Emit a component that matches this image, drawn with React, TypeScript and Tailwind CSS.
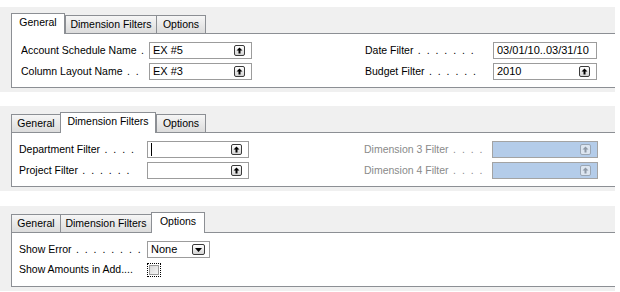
import React from 'react';

type TabName = 'General' | 'Dimension Filters' | 'Options';

const tabs: { name: TabName; w: string; wActive: string }[] = [
  { name: 'General', w: 'w-[50px]', wActive: 'w-[54px]' },
  { name: 'Dimension Filters', w: 'w-[92px]', wActive: 'w-[96px]' },
  { name: 'Options', w: 'w-[50px]', wActive: 'w-[54px]' },
];

const LookupBtn = ({ disabled }: { disabled?: boolean }) => (
  <span
    className={`ml-auto flex h-[11px] w-[11px] items-center justify-center rounded-[2px] border ${
      disabled ? 'border-[#9aa6b4] bg-[#dce5f0]' : 'border-[#3a3a3a] bg-gradient-to-b from-white to-[#d4d4d4]'
    }`}
  >
    <svg width="7" height="7" viewBox="0 0 7 7">
      <path d="M3.5 0.5 L6.5 3.5 H4.5 V6.5 H2.5 V3.5 H0.5 Z" fill={disabled ? '#8e99a6' : '#000'} />
    </svg>
  </span>
);

const Field = ({
  value,
  width,
  lookup = true,
  disabled,
  cursor,
}: {
  value?: string;
  width: string;
  lookup?: boolean;
  disabled?: boolean;
  cursor?: boolean;
}) => (
  <div
    className={`flex h-[17px] items-center border pl-[3px] pr-[6px] text-[11px] ${width} ${
      disabled ? 'border-[#a3a3a3] bg-[#b4cce9]' : 'border-[#9c9c9c] bg-white'
    }`}
  >
    {cursor && <span className="h-[13px] w-px bg-black" />}
    <span className="whitespace-nowrap leading-none">{value}</span>
    {lookup && <LookupBtn disabled={disabled} />}
  </div>
);

const Label = ({ text, dots, disabled }: { text: string; dots: string; disabled?: boolean }) => (
  <div className={`w-[128px] overflow-hidden whitespace-nowrap ${disabled ? 'text-[#8a8a8a]' : 'text-black'}`}>
    {text}
    <span className="tracking-[1.5px]">{dots}</span>
  </div>
);

const Panel = ({ active, children, className = '' }: { active: TabName; children: React.ReactNode; className?: string }) => (
  <div className={`h-[85px] w-[615px] bg-[#f0f0f0] ${className}`}>
    <div className="flex h-[26px] items-end pl-[11px]">
      {tabs.map((t) =>
        t.name === active ? (
          <div
            key={t.name}
            className={`relative z-10 -mb-px flex h-[21px] items-center justify-center border-x border-t border-[#8c8f94] bg-white pb-[2px] ${t.wActive}`}
          >
            {t.name}
          </div>
        ) : (
          <div
            key={t.name}
            className={`flex h-[18px] items-center justify-center border-l border-t border-r border-[#8c8f94] bg-gradient-to-b from-[#f6f6f6] to-[#dcdcdc] -mr-px ${t.w}`}
          >
            {t.name}
          </div>
        )
      )}
    </div>
    <div className="ml-[11px] h-[55px] border-y border-l border-[#8c8f94] bg-white">{children}</div>
  </div>
);

const App: React.FC = () => {
  return (
    <div className="h-[292px] w-[620px] overflow-hidden bg-white pt-[7px] font-['Liberation_Sans',Arial,sans-serif] text-[10.5px] text-black">
      <Panel active="General">
        <div className="flex pt-[8px] pl-[9px]">
          <div className="flex flex-col gap-[4px]">
            <div className="flex h-[17px] items-center">
              <Label text="Account Schedule Name" dots=" ." />
              <Field value="EX #5" width="w-[103px]" />
            </div>
            <div className="flex h-[17px] items-center">
              <Label text="Column Layout Name" dots=" . ." />
              <Field value="EX #3" width="w-[103px]" />
            </div>
          </div>
          <div className="ml-[113px] flex flex-col gap-[4px]">
            <div className="flex h-[17px] items-center">
              <Label text="Date Filter" dots=" . . . . . . ." />
              <Field value="03/01/10..03/31/10" width="w-[104px]" lookup={false} />
            </div>
            <div className="flex h-[17px] items-center">
              <Label text="Budget Filter" dots=" . . . . . ." />
              <Field value="2010" width="w-[104px]" />
            </div>
          </div>
        </div>
      </Panel>

      <Panel active="Dimension Filters" className="mt-[14px]">
        <div className="flex pt-[8px] pl-[7px]">
          <div className="flex flex-col gap-[4px]">
            <div className="flex h-[17px] items-center">
              <Label text="Department Filter" dots=" . . . ." />
              <Field width="w-[102px]" cursor />
            </div>
            <div className="flex h-[17px] items-center">
              <Label text="Project Filter" dots=" . . . . . ." />
              <Field width="w-[102px]" />
            </div>
          </div>
          <div className="ml-[115px] flex flex-col gap-[4px]">
            <div className="flex h-[17px] items-center">
              <Label text="Dimension 3 Filter" dots=" . . . ." disabled />
              <Field width="w-[106px]" disabled />
            </div>
            <div className="flex h-[17px] items-center">
              <Label text="Dimension 4 Filter" dots=" . . . ." disabled />
              <Field width="w-[106px]" disabled />
            </div>
          </div>
        </div>
      </Panel>

      <Panel active="Options" className="mt-[15px]">
        <div className="flex flex-col gap-[3px] pt-[8px] pl-[7px]">
          <div className="flex h-[17px] items-center">
            <Label text="Show Error" dots=" . . . . . . . ." />
            <div className="flex h-[17px] w-[63px] items-center border border-[#9c9c9c] bg-white pl-[3px] pr-[4px] text-[11px]">
              <span className="leading-none">None</span>
              <span className="ml-auto flex h-[11px] w-[13px] items-center justify-center rounded-[2px] border border-[#3a3a3a] bg-gradient-to-b from-white to-[#d4d4d4]">
                <svg width="7" height="4" viewBox="0 0 7 4">
                  <path d="M0 0 H7 L3.5 4 Z" fill="#000" />
                </svg>
              </span>
            </div>
          </div>
          <div className="flex h-[18px] items-center">
            <div className="w-[128px] whitespace-nowrap">Show Amounts in Add....</div>
            <div className="flex h-[14px] w-[14px] items-center justify-center border border-dotted border-black">
              <span className="h-[10px] w-[10px] border border-[#9a9a9a] bg-gradient-to-br from-[#d8d8d8] to-[#f6f6f6]" />
            </div>
          </div>
        </div>
      </Panel>
    </div>
  );
};

export default App;
